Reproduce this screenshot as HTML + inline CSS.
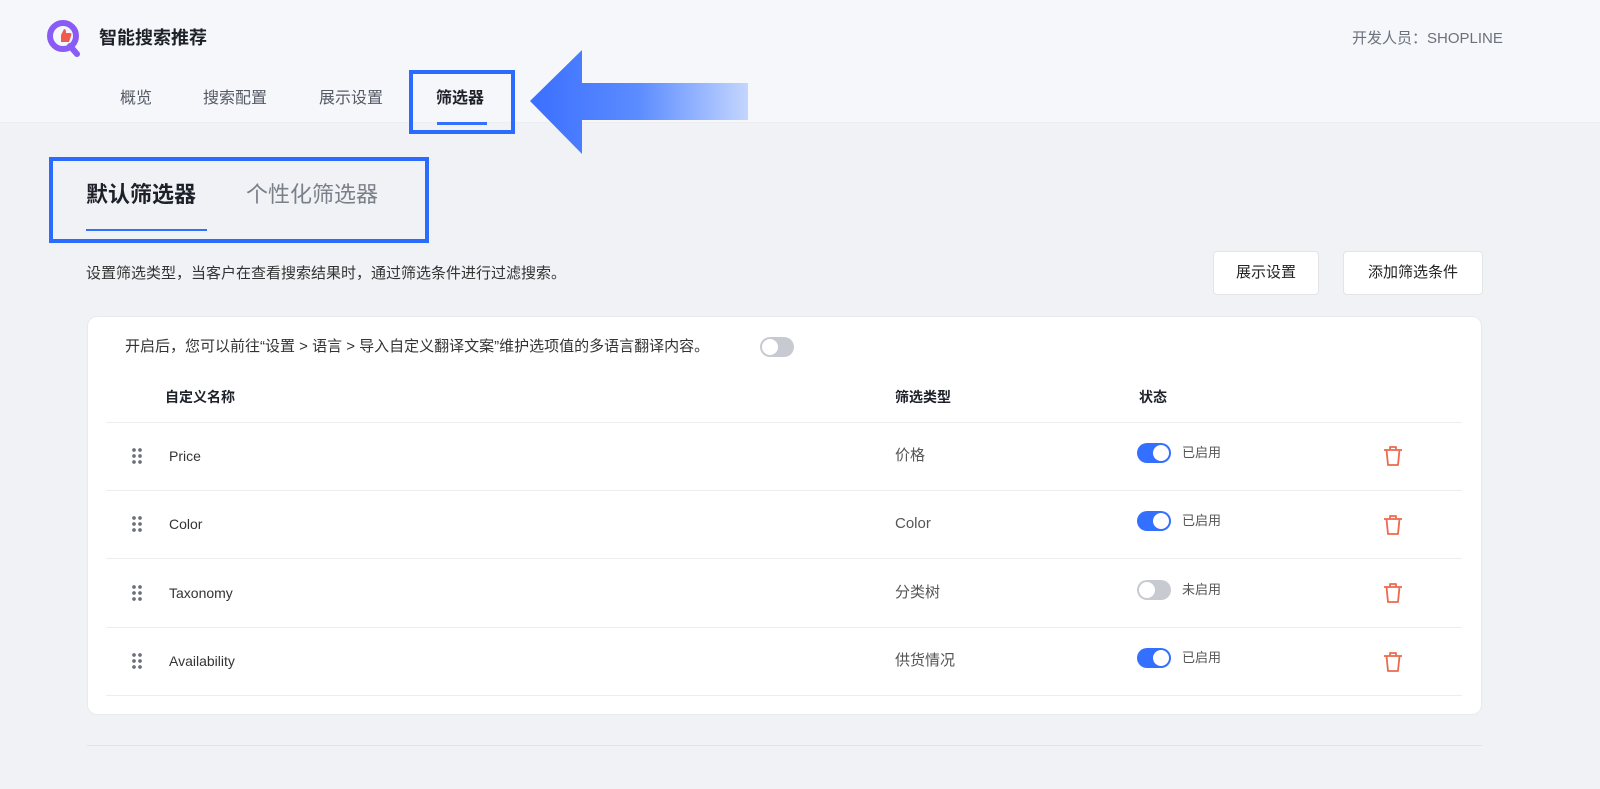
<!DOCTYPE html>
<html><head><meta charset="utf-8"><style>
*{margin:0;padding:0;box-sizing:border-box}
body{width:1600px;height:789px;background:#f1f2f5;font-family:"Liberation Sans","Noto Sans CJK SC",sans-serif;position:relative;overflow:hidden;color:#333}
.a{position:absolute;line-height:20px}
.hdr{left:0;top:0;width:1600px;height:123px;background:#f6f7fa;border-bottom:1px solid #eceef2}
.nav{font-size:16px;color:#555b66;top:89px}
.t{font-size:14px;color:#333}
.line{height:1px;background:#ebedf0;left:106px;width:1356px}
.tog{width:34px;height:20px;border-radius:10px;background:#3370ff}
.tog::after{content:"";position:absolute;right:2px;top:2px;width:16px;height:16px;border-radius:50%;background:#fff}
.tog.off{background:#c7cad1}
.tog.off::after{left:2px;right:auto}
.dots{width:12px;height:18px;background-image:radial-gradient(circle,#6b717c 1.7px,transparent 2px);background-size:6px 6px}
.btn{background:#fff;border:1px solid #e2e4e8;border-radius:4px;font-size:15px;color:#222;text-align:center;line-height:42px;height:44px;top:251px}
.ty{font-size:15px;color:#555}
.st{font-size:13px;color:#555}
</style></head><body>
<div class="a hdr"></div>
<svg class="a" style="left:44px;top:18px" width="40" height="40" viewBox="0 0 40 40"><circle cx="19" cy="18" r="13" fill="none" stroke="#8a5cf6" stroke-width="6"/><path d="M26 28 L33 36" stroke="#8a5cf6" stroke-width="6" stroke-linecap="round"/><path d="M13 17h4l3-6c2 0 2 2 2 4h4c1 0 2 1 1 3l-2 6h-8v-7z" fill="#f25a4f"/></svg>
<div class="a" style="left:99px;top:28px;font-size:18px;font-weight:bold;color:#1d2129">智能搜索推荐</div>
<div class="a" style="left:1352px;top:29px;font-size:15px;color:#6b717c">开发人员：SHOPLINE</div>
<div class="a nav" style="left:120px">概览</div>
<div class="a nav" style="left:203px">搜索配置</div>
<div class="a nav" style="left:319px">展示设置</div>
<div class="a nav" style="left:436px;color:#1d2129;font-weight:bold">筛选器</div>
<div class="a" style="left:437px;top:122px;width:50px;height:3px;background:#3370ff"></div>
<div class="a" style="left:409px;top:70px;width:106px;height:64px;border:4px solid #2c6bff"></div>
<svg class="a" style="left:528px;top:50px" width="222" height="106" viewBox="0 0 222 106"><defs><linearGradient id="g" x1="0" x2="1"><stop offset="0" stop-color="#3a6fff"/><stop offset="0.5" stop-color="#5c8cff"/><stop offset="1" stop-color="#c4d6ff"/></linearGradient></defs><path d="M2 51 L54 0 L54 33 L220 33 L220 70 L54 70 L54 104 Z" fill="url(#g)"/></svg>
<div class="a" style="left:49px;top:157px;width:380px;height:86px;border:4px solid #2c6bff"></div>
<div class="a" style="left:86px;top:182px;font-size:22px;line-height:26px;font-weight:bold;color:#1d2129">默认筛选器</div>
<div class="a" style="left:246px;top:182px;font-size:22px;line-height:26px;color:#7a808a">个性化筛选器</div>
<div class="a" style="left:86px;top:229px;width:121px;height:2px;background:#3370ff"></div>
<div class="a" style="left:86px;top:264px;font-size:15px;color:#333">设置筛选类型，当客户在查看搜索结果时，通过筛选条件进行过滤搜索。</div>
<div class="a btn" style="left:1213px;width:106px">展示设置</div>
<div class="a btn" style="left:1343px;width:140px">添加筛选条件</div>
<div class="a" style="left:87px;top:316px;width:1395px;height:399px;background:#fff;border-radius:10px;border:1px solid #e8eaee"></div>
<div class="a" style="left:125px;top:337px;font-size:15px;color:#333">开启后，您可以前往“设置 &gt; 语言 &gt; 导入自定义翻译文案”维护选项值的多语言翻译内容。</div>
<div class="a tog off" style="left:760px;top:337px"></div>
<div class="a t" style="left:165px;top:387px;font-weight:bold;color:#1d2129">自定义名称</div>
<div class="a t" style="left:895px;top:387px;font-weight:bold;color:#1d2129">筛选类型</div>
<div class="a t" style="left:1139px;top:387px;font-weight:bold;color:#1d2129">状态</div>
<div class="a line" style="top:422px"></div>
<div class="a line" style="top:490px"></div>
<div class="a line" style="top:558px"></div>
<div class="a line" style="top:627px"></div>
<div class="a line" style="top:695px"></div>
<div class="a" style="left:87px;top:745px;width:1395px;height:1px;background:#e1e3e7"></div>

<div class="a dots" style="left:131px;top:447px"></div><div class="a t" style="left:169px;top:446px">Price</div><div class="a ty" style="left:895px;top:446px">价格</div><div class="a tog" style="left:1137px;top:443px"></div><div class="a st" style="left:1182px;top:443px">已启用</div>
<div class="a dots" style="left:131px;top:515px"></div><div class="a t" style="left:169px;top:514px">Color</div><div class="a ty" style="left:895px;top:514px">Color</div><div class="a tog" style="left:1137px;top:511px"></div><div class="a st" style="left:1182px;top:511px">已启用</div>
<div class="a dots" style="left:131px;top:584px"></div><div class="a t" style="left:169px;top:583px">Taxonomy</div><div class="a ty" style="left:895px;top:583px">分类树</div><div class="a tog off" style="left:1137px;top:580px"></div><div class="a st" style="left:1182px;top:580px">未启用</div>
<div class="a dots" style="left:131px;top:652px"></div><div class="a t" style="left:169px;top:651px">Availability</div><div class="a ty" style="left:895px;top:651px">供货情况</div><div class="a tog" style="left:1137px;top:648px"></div><div class="a st" style="left:1182px;top:648px">已启用</div>

<svg class="a" style="left:1382px;top:445px" width="22" height="22" viewBox="0 0 22 22"><g fill="none" stroke="#ec6a4e" stroke-width="1.8" stroke-linejoin="round"><path d="M2 5h18M8 5V2h6v3M4.5 5l1.5 15h10l1.5-15"/></g></svg>
<svg class="a" style="left:1382px;top:514px" width="22" height="22" viewBox="0 0 22 22"><g fill="none" stroke="#ec6a4e" stroke-width="1.8" stroke-linejoin="round"><path d="M2 5h18M8 5V2h6v3M4.5 5l1.5 15h10l1.5-15"/></g></svg>
<svg class="a" style="left:1382px;top:582px" width="22" height="22" viewBox="0 0 22 22"><g fill="none" stroke="#ec6a4e" stroke-width="1.8" stroke-linejoin="round"><path d="M2 5h18M8 5V2h6v3M4.5 5l1.5 15h10l1.5-15"/></g></svg>
<svg class="a" style="left:1382px;top:651px" width="22" height="22" viewBox="0 0 22 22"><g fill="none" stroke="#ec6a4e" stroke-width="1.8" stroke-linejoin="round"><path d="M2 5h18M8 5V2h6v3M4.5 5l1.5 15h10l1.5-15"/></g></svg>
</body></html>
